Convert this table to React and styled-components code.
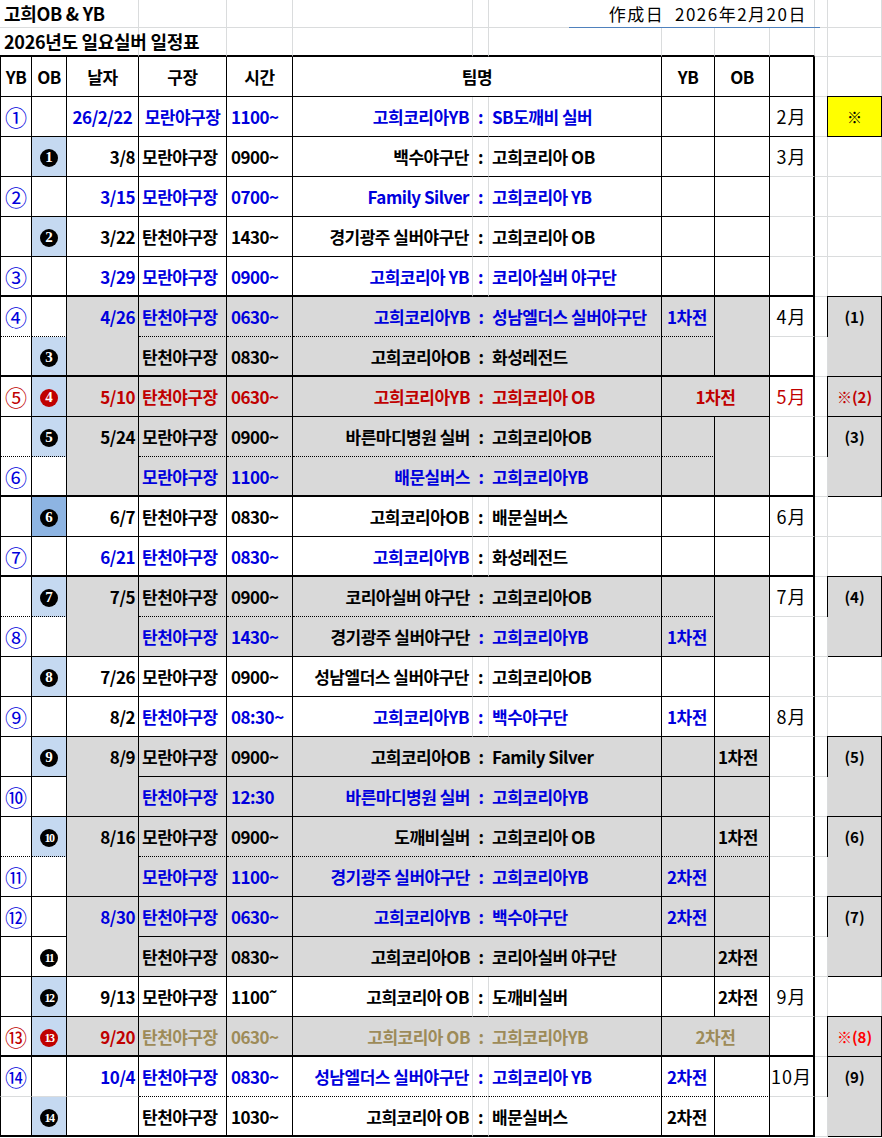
import React from 'react';
import styled, { createGlobalStyle } from 'styled-components';

const GlobalStyle = createGlobalStyle`
  html, body { margin: 0; padding: 0; background: #fff; }
  body { font-family: "Noto Sans CJK KR", "Noto Sans", sans-serif; }
`;

const BLUE = '#0000dd';
const RED = '#c00000';
const TAN = '#9d8b58';
const GRAY = '#d9d9d9';
const SKY = '#c5d9f1';
const SKY_DARK = '#8db4e2';
const GRID = '#dadcdd';

const lines = {
  thin: '1px solid #000',
  thick: '2px solid #000',
  dot: '1px dotted #000',
  grid: `1px solid ${GRID}`,
  none: '0 none',
};

// A..M columns, same widths as the spreadsheet
const Sheet = styled.div`
  display: grid;
  grid-template-columns: 32px 35px 72px 88px 66px 180px 16px 173px 53px 55px 45px 13px 54px;
  grid-template-rows: 28px 29px repeat(27, 40px);
  width: 882px;
`;

const Cell = styled.div`
  box-sizing: border-box;
  grid-column: span ${p => p.$cs || 1};
  grid-row: span ${p => p.$rs || 1};
  border-left: ${p => (p.$l ? lines[p.$l] : 'none')};
  border-right: ${p => lines[p.$r || 'thin']};
  border-bottom: ${p => lines[p.$b || 'thin']};
  background: ${p => p.$bg || 'transparent'};
  color: ${p => p.$c || '#000'};
  text-align: ${p => p.$al || 'center'};
  padding-left: ${p => p.$pl || 0}px;
  padding-right: ${p => p.$pr || 0}px;
  font-size: 17px;
  font-weight: 700;
  letter-spacing: -0.5px;
  line-height: 39px;
  white-space: nowrap;
`;

const TitleCell = styled(Cell)`
  font-size: 18px;
  line-height: 27px;
  letter-spacing: -0.3px;
`;

const Stamp = styled(TitleCell)`
  position: relative;
  font-family: "Noto Sans CJK JP", sans-serif;
  font-weight: 400;
  font-size: 17px;
  letter-spacing: 1.5px;
  &::after {
    content: '';
    position: absolute;
    left: 80px;
    right: -6px;
    bottom: -1px;
    height: 1px;
    background: #4f81bd;
    z-index: 1;
  }
`;

const NoCell = styled(Cell)`
  font-family: "Noto Sans CJK JP", sans-serif;
  font-weight: 400;
  font-size: 22px;
  letter-spacing: 0;
`;

const MonthCell = styled(Cell)`
  font-family: "Noto Sans CJK JP", sans-serif;
  font-weight: 400;
  font-size: 18px;
  letter-spacing: 1px;
`;

const Note = styled(Cell)`
  margin: -1px 0 0 -1px;
  border: 1px solid #000;
  font-size: 15px;
  letter-spacing: 0;
`;

const Badge = styled.span`
  display: inline-flex;
  align-items: center;
  justify-content: center;
  width: 18px;
  height: 18px;
  border-radius: 50%;
  background: ${p => p.$bg};
  color: #fff;
  font-family: "Liberation Serif", serif;
  font-size: ${p => (p.$wide ? 12 : 15)}px;
  letter-spacing: ${p => (p.$wide ? -1.5 : 0)}px;
  font-weight: 700;
  line-height: 1;
  vertical-align: middle;
  margin-top: -3px;
`;

const rows = [
  { no: '①', c: BLUE, center: true, date: '26/2/22', ground: '모란야구장', time: '1100~', home: '고희코리아YB', away: 'SB도깨비 실버', month: '2月', monthBox: true, note: { t: '※', bg: '#ffff00' } },
  { b: 1, date: '3/8', ground: '모란야구장', time: '0900~', home: '백수야구단', away: '고희코리아 OB', month: '3月' },
  { no: '②', c: BLUE, date: '3/15', ground: '모란야구장', time: '0700~', home: 'Family Silver', away: '고희코리아 YB' },
  { b: 2, date: '3/22', ground: '탄천야구장', time: '1430~', home: '경기광주 실버야구단', away: '고희코리아 OB' },
  { no: '③', c: BLUE, date: '3/29', ground: '모란야구장', time: '0900~', home: '고희코리아 YB', away: '코리아실버 야구단', line: 'thick' },
  { no: '④', c: BLUE, gray: true, date: '4/26', dateSpan: 2, ground: '탄천야구장', time: '0630~', home: '고희코리아YB', away: '성남엘더스 실버야구단', yb: '1차전', obSpan: 2, month: '4月', note: { t: '(1)', span: 2 }, line: 'dot' },
  { b: 3, gray: true, cont: ['date', 'ob', 'note'], ground: '탄천야구장', time: '0830~', home: '고희코리아OB', away: '화성레전드', line: 'thick' },
  { no: '⑤', noC: RED, c: RED, gray: true, b: 4, bRed: true, date: '5/10', ground: '탄천야구장', time: '0630~', home: '고희코리아YB', away: '고희코리아 OB', both: '1차전', month: '5月', mc: RED, note: { t: '※(2)', c: RED } },
  { b: 5, gray: true, date: '5/24', dateSpan: 2, ground: '모란야구장', time: '0900~', home: '바른마디병원 실버', away: '고희코리아OB', obSpan: 2, note: { t: '(3)', span: 2 }, line: 'dot' },
  { no: '⑥', c: BLUE, gray: true, cont: ['date', 'ob', 'note'], ground: '모란야구장', time: '1100~', home: '배문실버스', away: '고희코리아YB', line: 'thick' },
  { b: 6, bBg: SKY_DARK, date: '6/7', ground: '탄천야구장', time: '0830~', home: '고희코리아OB', away: '배문실버스', month: '6月' },
  { no: '⑦', c: BLUE, date: '6/21', ground: '탄천야구장', time: '0830~', home: '고희코리아YB', away: '화성레전드', ac: '#000', line: 'thick' },
  { b: 7, gray: true, date: '7/5', dateSpan: 2, ground: '탄천야구장', time: '0900~', home: '코리아실버 야구단', away: '고희코리아OB', obSpan: 2, month: '7月', note: { t: '(4)', span: 2 }, line: 'dot' },
  { no: '⑧', c: BLUE, gray: true, cont: ['date', 'ob', 'note'], ground: '탄천야구장', time: '1430~', home: '경기광주 실버야구단', hc: '#000', away: '고희코리아YB', yb: '1차전' },
  { b: 8, date: '7/26', ground: '모란야구장', time: '0900~', home: '성남엘더스 실버야구단', away: '고희코리아OB' },
  { no: '⑨', c: BLUE, date: '8/2', dc: '#000', ground: '탄천야구장', time: '08:30~', home: '고희코리아YB', away: '백수야구단', yb: '1차전', month: '8月' },
  { b: 9, gray: true, date: '8/9', dateSpan: 2, ground: '모란야구장', time: '0900~', home: '고희코리아OB', away: 'Family Silver', ob: '1차전', note: { t: '(5)', span: 2 } },
  { no: '⑩', c: BLUE, gray: true, cont: ['date', 'note'], ground: '탄천야구장', time: '12:30', home: '바른마디병원 실버', away: '고희코리아YB' },
  { b: 10, gray: true, date: '8/16', dateSpan: 2, ground: '모란야구장', time: '0900~', home: '도깨비실버', away: '고희코리아 OB', ob: '1차전', note: { t: '(6)', span: 2 }, line: 'dot' },
  { no: '⑪', c: BLUE, gray: true, cont: ['date', 'note'], ground: '모란야구장', time: '1100~', home: '경기광주 실버야구단', away: '고희코리아YB', yb: '2차전' },
  { no: '⑫', c: BLUE, gray: true, date: '8/30', dateSpan: 2, ground: '탄천야구장', time: '0630~', home: '고희코리아YB', away: '백수야구단', yb: '2차전', note: { t: '(7)', span: 2 } },
  { b: 11, bBg: 'transparent', gray: true, cont: ['date', 'note'], ground: '탄천야구장', time: '0830~', home: '고희코리아OB', away: '코리아실버 야구단', ob: '2차전' },
  { b: 12, date: '9/13', ground: '모란야구장', time: '1100˜', home: '고희코리아 OB', away: '도깨비실버', ob: '2차전', month: '9月' },
  { no: '⑬', noC: RED, b: 13, bRed: true, gray: true, date: '9/20', dc: RED, c: TAN, ground: '탄천야구장', time: '0630~', home: '고희코리아 OB', away: '고희코리아YB', both: '2차전', note: { t: '※(8)', c: '#ff0000' }, line: 'thick' },
  { no: '⑭', c: BLUE, date: '10/4', ground: '탄천야구장', time: '0830~', home: '성남엘더스 실버야구단', away: '고희코리아 YB', yb: '2차전', month: '10月', note: { t: '(9)', span: 2 }, line: 'dot', soft: true },
  { b: 14, date: '', ground: '탄천야구장', time: '1030~', home: '고희코리아 OB', away: '배문실버스', yb: '2차전', cont: ['note'], line: 'thick' },
];

const renderRow = (r, i) => {
  const next = rows[i + 1] || {};
  const ln = r.line || 'thin';
  const c = r.c || '#000';
  const bg = r.gray ? GRAY : undefined;
  const side = r.soft ? 'grid' : ln;
  const inner = r.gray ? 'none' : 'grid';
  const skip = k => (r.cont || []).includes(k);
  const k = `r${i}-`;
  const out = [];

  out.push(
    <NoCell key={k + 'a'} $l="thin" $b={side} $c={r.noC || BLUE}>{r.no}</NoCell>
  );
  out.push(
    <Cell key={k + 'b'} $b={side} $bg={r.b ? r.bBg || SKY : undefined}>
      {r.b && <Badge $bg={r.bRed ? RED : '#000'} $wide={r.b > 9}>{r.b}</Badge>}
    </Cell>
  );
  if (!skip('date')) {
    out.push(
      <Cell key={k + 'c'} $rs={r.dateSpan} $b={r.dateSpan ? next.line || 'thin' : side} $bg={bg}
        $al={r.center ? 'center' : 'right'} $pr={r.center ? 0 : 3} $c={r.dc || c}>
        {r.date}
      </Cell>
    );
  }
  out.push(
    <Cell key={k + 'd'} $b={ln} $bg={bg} $c={c} $al={r.center ? 'center' : 'left'} $pl={r.center ? 0 : 3}>{r.ground}</Cell>
  );
  out.push(<Cell key={k + 'e'} $b={ln} $bg={bg} $c={c} $al="left" $pl={4}>{r.time}</Cell>);
  out.push(<Cell key={k + 'f'} $b={ln} $r={inner} $bg={bg} $c={r.hc || c} $al="right" $pr={3}>{r.home}</Cell>);
  out.push(<Cell key={k + 'g'} $b={ln} $r={inner} $bg={bg} $c={r.ac || c}>:</Cell>);
  out.push(<Cell key={k + 'h'} $b={ln} $bg={bg} $c={r.ac || c} $al="left" $pl={3}>{r.away}</Cell>);
  if (r.both) {
    out.push(<Cell key={k + 'i'} $cs={2} $b={ln} $bg={bg} $c={c}>{r.both}</Cell>);
  } else {
    out.push(<Cell key={k + 'i'} $b={ln} $bg={bg} $c={c} $al="left" $pl={5}>{r.yb}</Cell>);
    if (!skip('ob')) {
      out.push(
        <Cell key={k + 'j'} $rs={r.obSpan} $b={r.obSpan ? next.line || 'thin' : ln} $bg={bg} $al="left" $pl={3}>{r.ob}</Cell>
      );
    }
  }
  const monthLine = r.monthBox ? 'thin' : ln === 'thick' ? 'thick' : 'grid';
  out.push(<MonthCell key={k + 'k'} $b={monthLine} $r="thick" $c={r.mc}>{r.month}</MonthCell>);
  out.push(<Cell key={k + 'l'} $b="grid" $r="grid" />);
  if (r.note) {
    out.push(
      <Note key={k + 'm'} $rs={r.note.span} $bg={r.note.bg || GRAY} $c={r.note.c}>{r.note.t}</Note>
    );
  } else if (!skip('note')) {
    out.push(<Cell key={k + 'm'} $b="grid" $r="grid" />);
  }
  return out;
};

const heads = ['YB', 'OB', '날자', '구장', '시간'];

export default function App() {
  return (
    <>
      <GlobalStyle />
      <Sheet>
        <TitleCell $cs={3} $b="grid" $r="grid" $al="left" $pl={4}>고희OB &amp; YB</TitleCell>
        <TitleCell $b="grid" $r="grid" />
        <TitleCell $b="grid" $r="grid" />
        <TitleCell $b="grid" $r="grid" />
        <TitleCell $b="grid" $r="grid" />
        <Stamp $cs={4} $b="grid" $r="grid" $al="right" $pr={7}>作成日&nbsp;&nbsp;2026年2月20日</Stamp>
        <TitleCell $b="grid" $r="grid" />
        <TitleCell $b="grid" $r="grid" />

        <TitleCell $cs={3} $b="thick" $r="grid" $al="left" $pl={4}>2026년도 일요실버 일정표</TitleCell>
        {Array.from({ length: 8 }, (_, i) => (
          <TitleCell key={'t' + i} $b="thick" $r="grid" />
        ))}
        <TitleCell $b="grid" $r="grid" />
        <TitleCell $b="grid" $r="grid" />

        {heads.map((h, i) => (
          <Cell key={'h' + i} $l={i === 0 ? 'thin' : undefined}>{h}</Cell>
        ))}
        <Cell $cs={3}>팀명</Cell>
        <Cell>YB</Cell>
        <Cell>OB</Cell>
        <Cell $r="thick" />
        <Cell $b="grid" $r="grid" />
        <Cell $b="grid" $r="grid" />

        {rows.map(renderRow)}
      </Sheet>
    </>
  );
}
